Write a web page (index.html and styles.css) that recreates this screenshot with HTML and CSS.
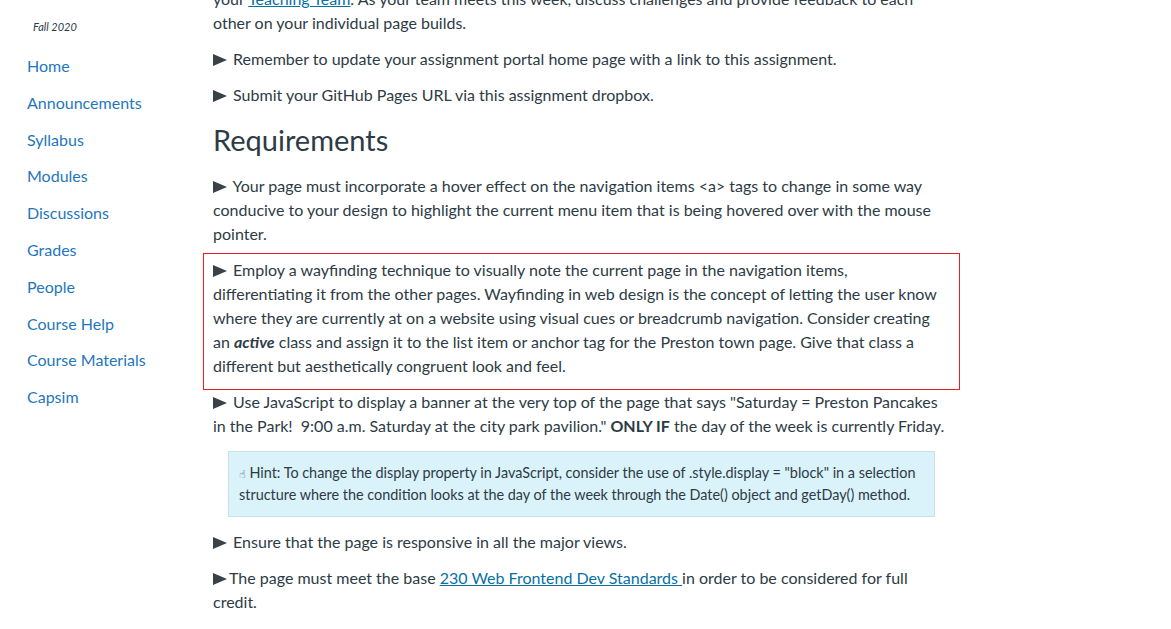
FILE: index.html
```html
<!DOCTYPE html>
<html lang="en">
<head>
<meta charset="utf-8">
<title>Assignment</title>
<link rel="stylesheet" href="styles.css">
</head>
<body>
<div class="page">
  <aside class="sidebar">
    <div class="term">Fall 2020</div>
    <nav class="nav">
      <a href="#">Home</a>
      <a href="#">Announcements</a>
      <a href="#">Syllabus</a>
      <a href="#">Modules</a>
      <a href="#">Discussions</a>
      <a href="#">Grades</a>
      <a href="#">People</a>
      <a href="#">Course Help</a>
      <a href="#">Course Materials</a>
      <a href="#">Capsim</a>
    </nav>
  </aside>
  <main class="main">
    <p class="para">your <a class="link" href="#">Teaching Team</a>. As your team meets this week, discuss challenges and provide feedback to each other on your individual page builds.</p>
    <p class="para"><span class="tri"></span> Remember to update your assignment portal home page with a link to this assignment.</p>
    <p class="para"><span class="tri"></span> Submit your GitHub Pages URL via this assignment dropbox.</p>
    <h2 class="heading">Requirements</h2>
    <p class="para"><span class="tri"></span> Your page must incorporate a hover effect on the navigation items &lt;a&gt; tags to change in some way conducive to your design to highlight the current menu item that is being hovered over with the mouse pointer.</p>
    <div class="outlined">
      <p class="para-in"><span class="tri"></span> Employ a wayfinding technique to visually note the current page in the navigation items, differentiating it from the other pages. Wayfinding in web design is the concept of letting the user know where they are currently at on a website using visual cues or breadcrumb navigation. Consider creating an <strong><em>active</em></strong> class and assign it to the list item or anchor tag for the Preston town page. Give that class a different but aesthetically congruent look and feel.</p>
    </div>
    <p class="para"><span class="tri"></span> Use JavaScript to display a banner at the very top of the page that says "Saturday = Preston Pancakes in the Park!&nbsp; 9:00 a.m. Saturday at the city park pavilion." <strong>ONLY IF</strong> the day of the week is currently Friday.</p>
    <div class="hint"><span class="hand">☝</span> Hint: To change the display property in JavaScript, consider the use of .style.display = "block" in a selection structure where the condition looks at the day of the week through the Date() object and getDay() method.</div>
    <p class="para"><span class="tri"></span> Ensure that the page is responsive in all the major views.</p>
    <p class="para"><span class="tri tight"></span>The page must meet the base <a class="link" href="#">230 Web Frontend Dev Standards </a>in order to be considered for full credit.</p>
  </main>
</div>
</body>
</html>
```
FILE: styles.css
```css
html, body {
  margin: 0;
  padding: 0;
  background: #ffffff;
}
body {
  font-family: Lato, "Open Sans", "Liberation Sans", sans-serif;
  color: #2d3b45;
  overflow: hidden;
  height: 629px;
}
.page {
  display: grid;
  grid-template-columns: 213px 737px;
  align-items: start;
}
.sidebar {
  padding: 19px 0 0 0;
}
.term {
  font-size: 11px;
  font-style: italic;
  line-height: 16px;
  padding-left: 33px;
  color: #2d3b45;
}
.nav {
  display: flex;
  flex-direction: column;
  gap: 12.8px;
  margin-top: 19px;
  padding-left: 27px;
}
.nav a {
  font-size: 16px;
  line-height: 24px;
  color: #1f77bb;
  text-decoration: none;
}
.main {
  margin-top: -13px;
  font-size: 16px;
  line-height: 24px;
}
.para {
  margin: 0 0 12px;
}
.para-in {
  margin: 0;
}
.tri {
  display: inline-block;
  width: 0;
  height: 0;
  border-left: 14px solid #3a4249;
  border-top: 6.5px solid transparent;
  border-bottom: 6.5px solid transparent;
  margin-right: 2px;
  vertical-align: -1px;
}
.tri.tight {
  margin-right: 2px;
}
.link {
  color: #0770a3;
  text-decoration: underline;
}
.heading {
  margin: 0 0 13px;
  font-size: 29px;
  font-weight: 400;
  line-height: 42px;
  color: #2d3b45;
}
.outlined {
  margin: -5px -10px 0;
  padding: 4px 9px 11px;
  border: 1px solid #e3211f;
}
.hint {
  margin: 13px 15px 13px;
  padding: 10px 10px;
  background: #daf2fa;
  border: 1px solid #c9e2ea;
  font-size: 14.4px;
  line-height: 22px;
}
.hand {
  font-family: "DejaVu Sans", sans-serif;
  font-size: 11px;
  line-height: 0;
  color: #3a4249;
}
```
